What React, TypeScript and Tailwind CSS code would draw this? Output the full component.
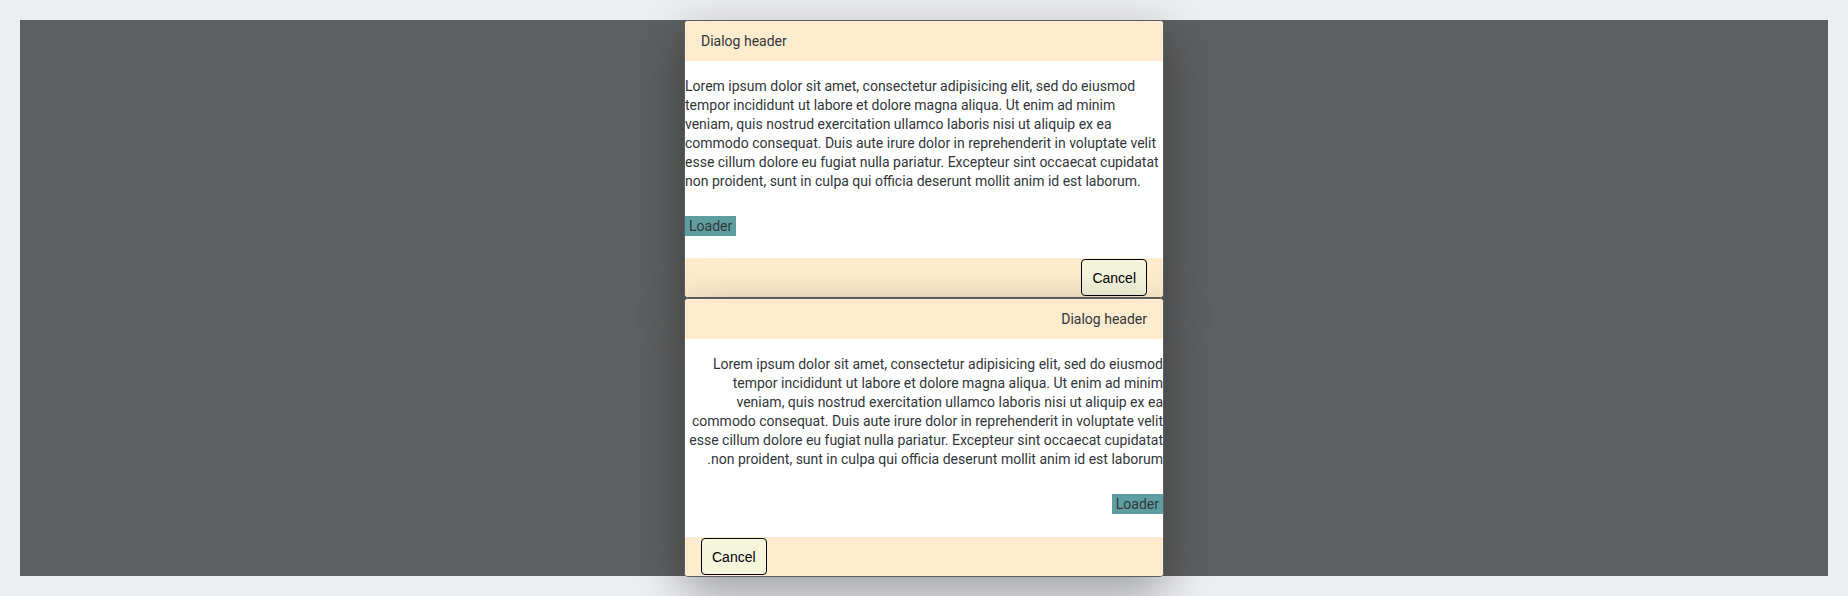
import React from 'react';

const lorem =
    'Lorem ipsum dolor sit amet, consectetur adipisicing elit, sed do eiusmod tempor incididunt ut labore et dolore magna aliqua. Ut enim ad minim veniam, quis nostrud exercitation ullamco laboris nisi ut aliquip ex ea commodo consequat. Duis aute irure dolor in reprehenderit in voluptate velit esse cillum dolore eu fugiat nulla pariatur. Excepteur sint occaecat cupidatat non proident, sunt in culpa qui officia deserunt mollit anim id est laborum.';

const Dialog: React.FC<{ rtl?: boolean }> = ({ rtl }) => {
    return (
        <div
            dir={rtl ? 'rtl' : 'ltr'}
            className={`w-[480px] ${rtl ? 'h-[279px]' : 'h-[278px]'} flex flex-col bg-white border border-[#5b5e61] rounded overflow-hidden shadow-[0_16px_48px_rgba(0,0,0,0.35)] text-[#32363a] font-['Roboto',sans-serif]`}
        >
            <header className="h-10 shrink-0 flex items-center px-4 bg-[#ffebcd] text-sm">
                Dialog header
            </header>
            <section className="flex-1 pt-4">
                <p className="text-sm leading-[19px]">{lorem}</p>
                <div className="mt-[23px]">
                    <span className="inline-block px-1 bg-[#5f9ea0] text-sm leading-5">Loader</span>
                </div>
            </section>
            <footer className="h-[39px] shrink-0 flex items-center justify-end px-4 bg-[#ffebcd]">
                <button className="h-[37px] px-[10px] bg-[#f5f5dc] border border-black rounded text-sm text-black font-['Liberation_Sans',Arial,sans-serif]">
                    Cancel
                </button>
            </footer>
        </div>
    );
};

export default function App() {
    return (
        <div className="min-h-screen bg-[#edeef0] px-5 pt-[21px] pb-[19px]">
            <div className="h-[556px] bg-[#5e5f60]">
                <div className="-mt-px flex flex-col items-center">
                    <Dialog />
                    <Dialog rtl />
                </div>
            </div>
        </div>
    );
}
